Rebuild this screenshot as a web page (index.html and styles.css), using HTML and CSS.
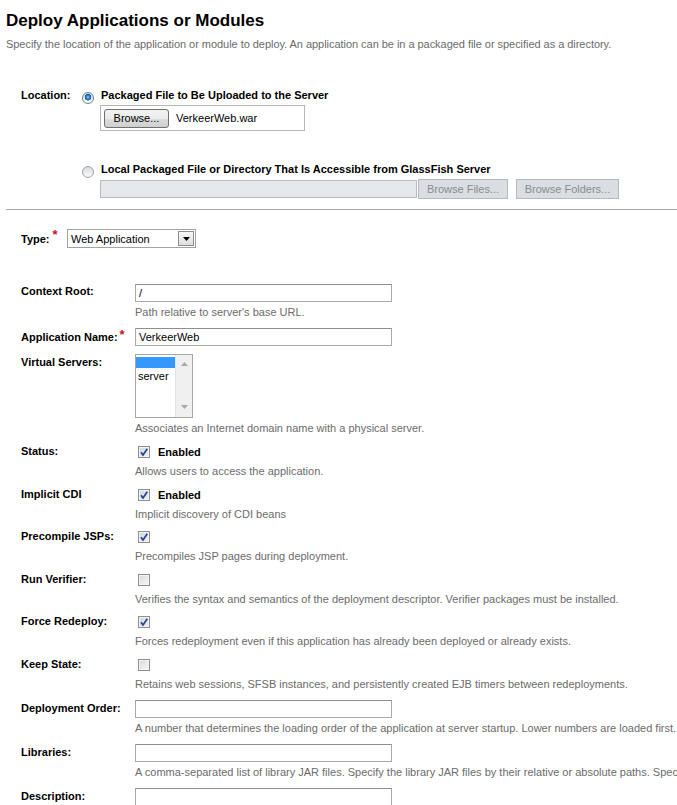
FILE: index.html
```html
<!DOCTYPE html>
<html lang="en">
<head>
<meta charset="utf-8">
<title>Deploy Applications or Modules</title>
<link rel="stylesheet" href="styles.css">
</head>
<body>
<div class="page">
  <h1 class="title">Deploy Applications or Modules</h1>
  <p class="intro">Specify the location of the application or module to deploy. An application can be in a packaged file or specified as a directory.</p>

  <div class="location">
    <div class="loc-label">Location:</div>
    <div class="loc-options">
      <div class="radio-line">
        <span class="radio radio-on"></span>
        <span class="radio-text">Packaged File to Be Uploaded to the Server</span>
      </div>
      <div class="filebox">
        <span class="browse-btn">Browse...</span>
        <span class="file-name">VerkeerWeb.war</span>
      </div>
      <div class="radio-line radio-second">
        <span class="radio"></span>
        <span class="radio-text">Local Packaged File or Directory That Is Accessible from GlassFish Server</span>
      </div>
      <div class="dir-line">
        <span class="dis-field"></span>
        <span class="dis-btn dis-files">Browse Files...</span>
        <span class="dis-btn dis-folders">Browse Folders...</span>
      </div>
    </div>
  </div>

  <div class="divider"></div>

  <div class="type-row">
    <div class="type-label">Type:<span class="req">*</span></div>
    <div class="select">
      <span class="select-text">Web Application</span>
      <span class="select-btn"><svg width="7" height="4" viewBox="0 0 7 4"><path d="M0 0H7L3.5 4Z" fill="#000"/></svg></span>
    </div>
  </div>

  <div class="props">
    <div class="prop prop-first">
      <div class="prop-label">Context Root:</div>
      <div class="prop-value">
        <div class="ctrl"><div class="field">/</div></div>
        <div class="help">Path relative to server's base URL.</div>
      </div>
    </div>

    <div class="prop prop-app">
      <div class="prop-label">Application Name:<span class="req req-small">*</span></div>
      <div class="prop-value">
        <div class="ctrl"><div class="field">VerkeerWeb</div></div>
      </div>
    </div>

    <div class="prop prop-vs">
      <div class="prop-label">Virtual Servers:</div>
      <div class="prop-value">
        <div class="listbox">
          <div class="list-items">
            <div class="list-sel"></div>
            <div class="list-item">server</div>
          </div>
          <div class="list-scroll">
            <svg width="7" height="4" viewBox="0 0 7 4"><path d="M0 4H7L3.5 0Z" fill="#a9a9a9"/></svg>
            <svg width="7" height="4" viewBox="0 0 7 4"><path d="M0 0H7L3.5 4Z" fill="#a9a9a9"/></svg>
          </div>
        </div>
        <div class="help">Associates an Internet domain name with a physical server.</div>
      </div>
    </div>

    <div class="prop prop-status">
      <div class="prop-label">Status:</div>
      <div class="prop-value">
        <div class="ctrl"><span class="cb cb-on"><svg width="10" height="10" viewBox="0 0 10 10"><path d="M2 5.2 L4 8 L8.3 1.8" fill="none" stroke="#27458f" stroke-width="1.7"/></svg></span><span class="cb-text">Enabled</span></div>
        <div class="help">Allows users to access the application.</div>
      </div>
    </div>

    <div class="prop prop-cb">
      <div class="prop-label">Implicit CDI</div>
      <div class="prop-value">
        <div class="ctrl"><span class="cb cb-on"><svg width="10" height="10" viewBox="0 0 10 10"><path d="M2 5.2 L4 8 L8.3 1.8" fill="none" stroke="#27458f" stroke-width="1.7"/></svg></span><span class="cb-text">Enabled</span></div>
        <div class="help">Implicit discovery of CDI beans</div>
      </div>
    </div>

    <div class="prop prop-cb">
      <div class="prop-label">Precompile JSPs:</div>
      <div class="prop-value">
        <div class="ctrl"><span class="cb cb-on"><svg width="10" height="10" viewBox="0 0 10 10"><path d="M2 5.2 L4 8 L8.3 1.8" fill="none" stroke="#27458f" stroke-width="1.7"/></svg></span></div>
        <div class="help">Precompiles JSP pages during deployment.</div>
      </div>
    </div>

    <div class="prop prop-cb">
      <div class="prop-label">Run Verifier:</div>
      <div class="prop-value">
        <div class="ctrl"><span class="cb"></span></div>
        <div class="help">Verifies the syntax and semantics of the deployment descriptor. Verifier packages must be installed.</div>
      </div>
    </div>

    <div class="prop prop-cb">
      <div class="prop-label">Force Redeploy:</div>
      <div class="prop-value">
        <div class="ctrl"><span class="cb cb-on"><svg width="10" height="10" viewBox="0 0 10 10"><path d="M2 5.2 L4 8 L8.3 1.8" fill="none" stroke="#27458f" stroke-width="1.7"/></svg></span></div>
        <div class="help">Forces redeployment even if this application has already been deployed or already exists.</div>
      </div>
    </div>

    <div class="prop prop-cb">
      <div class="prop-label">Keep State:</div>
      <div class="prop-value">
        <div class="ctrl"><span class="cb"></span></div>
        <div class="help">Retains web sessions, SFSB instances, and persistently created EJB timers between redeployments.</div>
      </div>
    </div>

    <div class="prop prop-order">
      <div class="prop-label">Deployment Order:</div>
      <div class="prop-value">
        <div class="ctrl"><div class="field"></div></div>
        <div class="help">A number that determines the loading order of the application at server startup. Lower numbers are loaded first. The default is 100.</div>
      </div>
    </div>

    <div class="prop prop-wide">
      <div class="prop-label">Libraries:</div>
      <div class="prop-value">
        <div class="ctrl"><div class="field"></div></div>
        <div class="help">A comma-separated list of library JAR files. Specify the library JAR files by their relative or absolute paths. Specify relative paths relative to domain-dir/lib/applibs.</div>
      </div>
    </div>

    <div class="prop prop-wide">
      <div class="prop-label">Description:</div>
      <div class="prop-value">
        <div class="ctrl"><div class="field"></div></div>
        <div class="help">&nbsp;</div>
      </div>
    </div>
  </div>
</div>
</body>
</html>
```

FILE: styles.css
```css
html, body {
  margin: 0;
  padding: 0;
  overflow: hidden;
  background: #fff;
}

body {
  font-family: "Liberation Sans", Arial, sans-serif;
  font-size: 11px;
  color: #000;
}

.page {
  padding: 0 0 0 6px;
}

.title {
  margin: 10px 0 0;
  font-size: 17px;
  line-height: 22px;
  font-weight: bold;
  color: #000;
}

.intro {
  margin: 5px 0 0;
  font-size: 11px;
  line-height: 14px;
  color: #6b6b6b;
  white-space: nowrap;
  letter-spacing: -0.04px;
}

/* Location block */
.location {
  display: flex;
  margin-top: 36px;
  padding-left: 15px;
}

.loc-label {
  width: 61px;
  flex: none;
  font-weight: bold;
  line-height: 16px;
}

.loc-options {
  display: flex;
  flex-direction: column;
  align-items: flex-start;
}

.radio-line {
  display: flex;
  align-items: flex-start;
  height: 16px;
  line-height: 16px;
}

.radio-second {
  margin-top: 30px;
}

.radio {
  box-sizing: border-box;
  width: 12px;
  height: 12px;
  margin-top: 5px;
  border-radius: 50%;
  border: 1px solid #9aa2aa;
  background: linear-gradient(#d9dcdf, #fbfbfb);
  flex: none;
}

.radio-on {
  border-color: #6f8196;
  background:
    radial-gradient(circle at 50% 42%, #9fd6ff 0, #2f86d0 1.6px, #1a5aa0 3px, rgba(26,90,160,0) 3.6px),
    linear-gradient(#d6dbe0, #fafbfc);
}

.radio-text {
  margin-left: 7px;
  font-weight: bold;
}

.filebox {
  box-sizing: border-box;
  display: flex;
  align-items: center;
  width: 205px;
  height: 26px;
  margin: 2px 0 0 18px;
  padding-left: 3px;
  border: 1px solid #b3b7bb;
  background: #fff;
}

.browse-btn {
  box-sizing: border-box;
  width: 65px;
  height: 19px;
  line-height: 17px;
  text-align: center;
  border: 1px solid #707070;
  border-radius: 3px;
  background: linear-gradient(#f3f3f3 0, #ebebeb 50%, #dddddd 51%, #cfcfcf 100%);
  color: #000;
}

.file-name {
  margin-left: 7px;
  color: #000;
}

.dir-line {
  display: flex;
  align-items: center;
  height: 20px;
  margin: 2px 0 0 18px;
}

.dis-field {
  box-sizing: border-box;
  width: 317px;
  height: 18px;
  border: 1px solid #b6bcc2;
  background: #e6e9ec;
}

.dis-btn {
  box-sizing: border-box;
  height: 20px;
  line-height: 18px;
  text-align: center;
  border: 1px solid #b4babf;
  background: #dadee2;
  color: #888c90;
}

.dis-files {
  width: 90px;
  margin-left: 1px;
}

.dis-folders {
  width: 103px;
  margin-left: 8px;
}

.divider {
  height: 1px;
  margin-top: 10px;
  background: #a3a8ad;
}

/* Type row */
.type-row {
  display: flex;
  align-items: flex-start;
  height: 19px;
  margin-top: 19px;
  padding-left: 15px;
}

.type-label {
  width: 46px;
  flex: none;
  font-weight: bold;
  line-height: 20px;
}

.req {
  display: inline-block;
  vertical-align: top;
  margin-left: 3px;
  color: #c4161c;
  font-size: 13px;
  line-height: 11px;
  font-weight: bold;
}

.req-small {
  margin-left: 2px;
}

.select {
  box-sizing: border-box;
  display: flex;
  align-items: center;
  justify-content: space-between;
  width: 129px;
  height: 19px;
  padding: 0 1px 0 3px;
  border: 1px solid #a3a3a3;
  background: #fff;
}

.select-text {
  line-height: 17px;
  padding-top: 1px;
}

.select-btn {
  box-sizing: border-box;
  display: flex;
  align-items: center;
  justify-content: center;
  width: 16px;
  height: 15px;
  border: 1px solid #8d8d8d;
  background: linear-gradient(#f7f7f7, #dedede);
}

/* Property sheet */
.props {
  margin-top: 36px;
  padding-left: 15px;
}

.prop {
  display: grid;
  grid-template-columns: 114px auto;
  margin-top: 4.5px;
}

.prop-first { margin-top: 0; }
.prop-app { margin-top: 6px; }
.prop-vs { margin-top: 8px; }
.prop-status { margin-top: 5px; }
.prop-order { margin-top: 6.5px; }
.prop-wide { margin-top: 6px; }

.prop-label {
  font-weight: bold;
  line-height: 16px;
  white-space: nowrap;
}

.prop-first .prop-label {
  margin-top: -1px;
}

.prop-app .prop-label {
  margin-top: 1px;
}

.prop-value {
  min-width: 0;
}

.ctrl {
  display: flex;
  align-items: center;
  height: 18px;
}

.field {
  box-sizing: border-box;
  width: 257px;
  height: 18px;
  padding-left: 3px;
  line-height: 17px;
  border: 1px solid #a9a9a9;
  border-top-color: #8f8f8f;
  background: #fff;
  color: #000;
}

.help {
  line-height: 20px;
  color: #6b6b6b;
  white-space: nowrap;
}

.cb {
  box-sizing: border-box;
  display: flex;
  align-items: center;
  justify-content: center;
  width: 12px;
  height: 12px;
  margin-left: 3px;
  border: 1px solid #8e8f8f;
  background: linear-gradient(135deg, #d6d9dd, #f8f9fa);
  box-shadow: inset 0 0 0 1px #f3f3f3;
}

.cb-on {
  background: linear-gradient(135deg, #cfd6e2, #eef1f6);
}

.cb-text {
  margin-left: 8px;
  font-weight: bold;
}

/* Listbox */
.listbox {
  box-sizing: border-box;
  display: flex;
  width: 58px;
  height: 64px;
  border: 1px solid #a6a6a6;
  background: #fff;
}

.list-items {
  width: 39px;
  padding-top: 2px;
}

.list-sel {
  height: 11px;
  background: #3399ff;
}

.list-item {
  padding: 2px 0 0 2px;
  line-height: 13px;
  color: #000;
}

.list-scroll {
  flex: 1;
  display: flex;
  flex-direction: column;
  align-items: center;
  justify-content: space-between;
  padding: 7px 0 8px;
  background: #f0f0f0;
  border-left: 1px solid #e3e3e3;
}
```
